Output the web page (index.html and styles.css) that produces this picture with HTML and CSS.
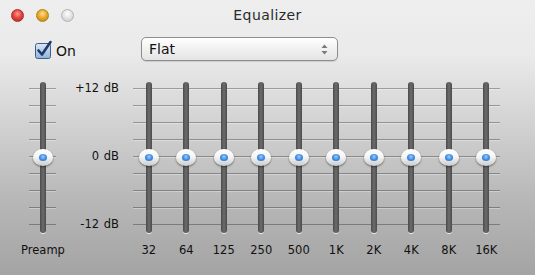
FILE: index.html
```html
<!DOCTYPE html>
<html lang="en">
<head>
    <meta charset="UTF-8">
    <title>Equalizer</title>
    <link rel="stylesheet" href="styles.css">
</head>
<body>
    <div class="window">
        <div class="titlebar">
            <div class="lights">
                <span class="light close"></span>
                <span class="light minimize"></span>
                <span class="light zoom"></span>
            </div>
            <div class="title">Equalizer</div>
        </div>

        <div class="controls">
            <label class="check">
                <svg class="checkbox" width="17" height="18" viewBox="0 0 17 18">
                    <defs>
                        <linearGradient id="boxfill" x1="0" y1="0" x2="0" y2="1">
                            <stop offset="0" stop-color="#dce8f5"/>
                            <stop offset="1" stop-color="#8fb2d8"/>
                        </linearGradient>
                    </defs>
                    <rect x="0.5" y="2.5" width="15" height="15" rx="2" fill="url(#boxfill)" stroke="#3d5f8e"/>
                    <path d="M3.5 9.5 L7 13.5 L15.5 1" fill="none" stroke="#1c3b6c" stroke-width="2.6" stroke-linecap="round" stroke-linejoin="round"/>
                </svg>
                <span class="check-text">On</span>
            </label>
            <div class="popup">
                <span>Flat</span>
                <svg class="arrows" width="7" height="11" viewBox="0 0 7 11">
                    <path d="M3.5 0.5 L6.5 4 L0.5 4 Z" fill="#7a7a7a"/>
                    <path d="M3.5 10.5 L6.5 7 L0.5 7 Z" fill="#7a7a7a"/>
                </svg>
            </div>
        </div>

        <div class="eq">
            <div class="slider preamp">
                <div class="rail">
                    <div class="track"></div>
                    <div class="knob"><span class="dot"></span></div>
                </div>
                <div class="band-label">Preamp</div>
            </div>

            <div class="scale">
                <span>+12 dB</span>
                <span>0 dB</span>
                <span>-12 dB</span>
            </div>

            <div class="bands" id="bands"></div>
        </div>
    </div>

    <script>
        // bandas del ecualizador
        const BANDS = ['32', '64', '125', '250', '500', '1K', '2K', '4K', '8K', '16K'];

        const bandsDiv = document.getElementById('bands');
        BANDS.forEach(name => {
            const slider = document.createElement('div');
            slider.className = 'slider';
            slider.innerHTML = `<div class="rail">
                    <div class="track"></div>
                    <div class="knob"><span class="dot"></span></div>
                </div>
                <div class="band-label">${name}</div>`;
            bandsDiv.appendChild(slider);
        });
    </script>
</body>
</html>
```

FILE: styles.css
```css
body {
    margin: 0;
    font-family: "DejaVu Sans", Verdana, sans-serif;
    color: #111;
}
.window {
    width: 535px;
    height: 275px;
    overflow: hidden;
    background: linear-gradient(to bottom, #eeeeee 0, #eaeaea 55px, #d0d0d0 130px, #b7b7b7 200px, #a4a4a4 275px);
}

/* barra de titulo */
.titlebar {
    height: 30px;
    display: grid;
    grid-template-columns: 1fr auto 1fr;
    align-items: center;
}
.lights {
    display: flex;
    gap: 12px;
    padding-left: 11px;
}
.light {
    width: 13px;
    height: 13px;
    border-radius: 50%;
    box-sizing: border-box;
}
.close {
    background: radial-gradient(circle at 50% 35%, #ff9a92 0, #e2463f 45%, #b3261f 100%);
    border: 1px solid #a4302b;
}
.minimize {
    background: radial-gradient(circle at 50% 35%, #ffe29a 0, #e9a92c 45%, #b97a10 100%);
    border: 1px solid #b0801e;
}
.zoom {
    background: radial-gradient(circle at 50% 35%, #ffffff 0, #e2e2e2 50%, #c4c4c4 100%);
    border: 1px solid #b4b4b4;
}
.title {
    grid-column: 2;
    font-size: 14px;
    letter-spacing: 0.4px;
    color: #2a2a2a;
}

/* checkbox y popup */
.controls {
    display: flex;
    align-items: center;
    margin-top: 7px;
    padding-left: 35px;
    height: 24px;
}
.check {
    width: 106px;
    display: flex;
    align-items: center;
    gap: 4px;
    font-size: 14px;
}
.check-text {
    margin-top: 3px;
}
.checkbox {
    overflow: visible;
    margin-top: 1px;
}
.popup {
    width: 197px;
    height: 24px;
    box-sizing: border-box;
    border: 1px solid #8d8d8d;
    border-radius: 5px;
    background: linear-gradient(to bottom, #ffffff, #f1f1f1 50%, #e4e4e4);
    box-shadow: 0 1px 1px rgba(0, 0, 0, 0.12);
    display: flex;
    align-items: center;
    justify-content: space-between;
    padding: 0 9px 0 7px;
    font-size: 14px;
}

/* ecualizador */
.eq {
    display: flex;
    margin-top: 21px;
    padding-left: 19px;
}
.slider {
    display: flex;
    flex-direction: column;
    align-items: center;
}
.preamp {
    width: 48px;
    background: repeating-linear-gradient(to bottom, rgba(0, 0, 0, 0.3) 0 1px, rgba(255, 255, 255, 0.3) 1px 2px, transparent 2px 17px);
    background-size: 27px 137px;
    background-position: 10px 6px;
    background-repeat: no-repeat;
}
.rail {
    display: grid;
    justify-items: center;
    align-items: center;
    height: 151px;
}
.track,
.knob {
    grid-area: 1 / 1;
}
.track {
    width: 6px;
    height: 151px;
    border-radius: 3px;
    background: linear-gradient(to right, #4b4b4b, #6c6c6c 50%, #4b4b4b);
    box-shadow: 0 1px 0 rgba(255, 255, 255, 0.75);
}
.knob {
    width: 20px;
    height: 17px;
    border-radius: 50%;
    background: linear-gradient(to bottom, #ffffff, #f6f6f6 45%, #cbcbcb);
    box-shadow: 0 1px 2px rgba(0, 0, 0, 0.5);
    display: flex;
    align-items: center;
    justify-content: center;
}
.dot {
    width: 8px;
    height: 7px;
    border-radius: 50%;
    background: radial-gradient(circle at 50% 40%, #9ccbff 0, #3b8ae0 55%, #2263b3 100%);
}
.band-label {
    margin-top: 11px;
    font-size: 11.5px;
    line-height: 13px;
}
.scale {
    width: 52px;
    height: 151px;
    box-sizing: border-box;
    padding-bottom: 3px;
    display: flex;
    flex-direction: column;
    justify-content: space-between;
    align-items: flex-end;
    font-size: 11.5px;
    line-height: 12px;
    word-spacing: 1px;
}
.bands {
    margin-left: 11px;
    display: grid;
    grid-template-columns: repeat(10, 37.5px);
    background: repeating-linear-gradient(to bottom, rgba(0, 0, 0, 0.3) 0 1px, rgba(255, 255, 255, 0.3) 1px 2px, transparent 2px 17px);
    background-size: 367px 137px;
    background-position: 3px 6px;
    background-repeat: no-repeat;
}
```
